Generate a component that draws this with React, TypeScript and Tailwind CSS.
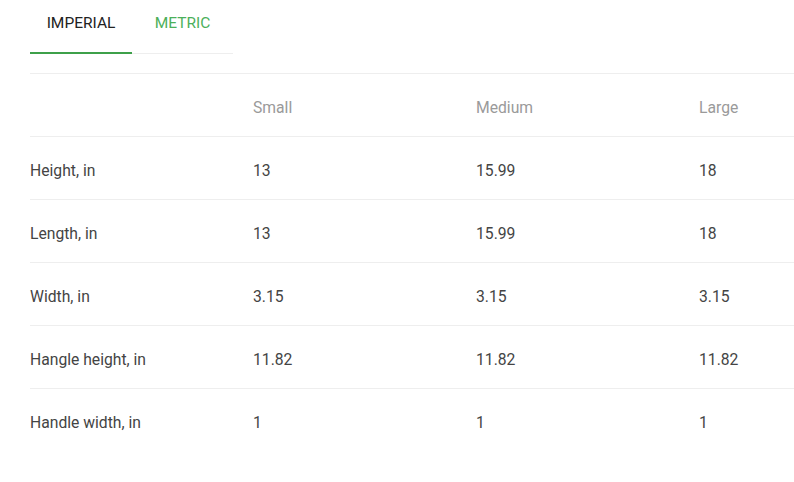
import React from 'react';

const rows = [
  { label: 'Height, in', values: ['13', '15.99', '18'] },
  { label: 'Length, in', values: ['13', '15.99', '18'] },
  { label: 'Width, in', values: ['3.15', '3.15', '3.15'] },
  { label: 'Hangle height, in', values: ['11.82', '11.82', '11.82'] },
  { label: 'Handle width, in', values: ['1', '1', '1'] },
];

function SizeTable() {
  return (
    <div
      className="w-[794px] h-[482px] bg-white overflow-hidden pl-[30px]"
      style={{ fontFamily: 'Roboto, "Liberation Sans", sans-serif' }}
    >
      <div className="flex items-start w-[203px] border-b border-[#eeeeee] h-[54px]">
        <button className="w-[102px] h-[54px] pt-[14px] leading-[18px] text-[15.5px] text-[#222222] border-b-2 border-[#3da04a] text-center flex justify-center items-start">
          IMPERIAL
        </button>
        <button className="w-[101px] pt-[14px] leading-[18px] text-[15.5px] text-[#4cb05a] text-center flex justify-center items-start">
          METRIC
        </button>
      </div>
      <div className="mt-[19px] w-[892px] text-[15.7px]">
        <div className="grid grid-cols-4 h-[63px] items-center pt-[6px] border-t border-[#eeeeee] text-[#9a9a9a]">
          <div />
          <div>Small</div>
          <div>Medium</div>
          <div>Large</div>
        </div>
        {rows.map((row) => (
          <div
            key={row.label}
            className="grid grid-cols-4 h-[63px] items-center pt-[6px] border-t border-[#eeeeee] text-[#444444]"
          >
            <div>{row.label}</div>
            {row.values.map((v, i) => (
              <div key={i}>{v}</div>
            ))}
          </div>
        ))}
      </div>
    </div>
  );
}

export default function App() {
  return <SizeTable />;
}
